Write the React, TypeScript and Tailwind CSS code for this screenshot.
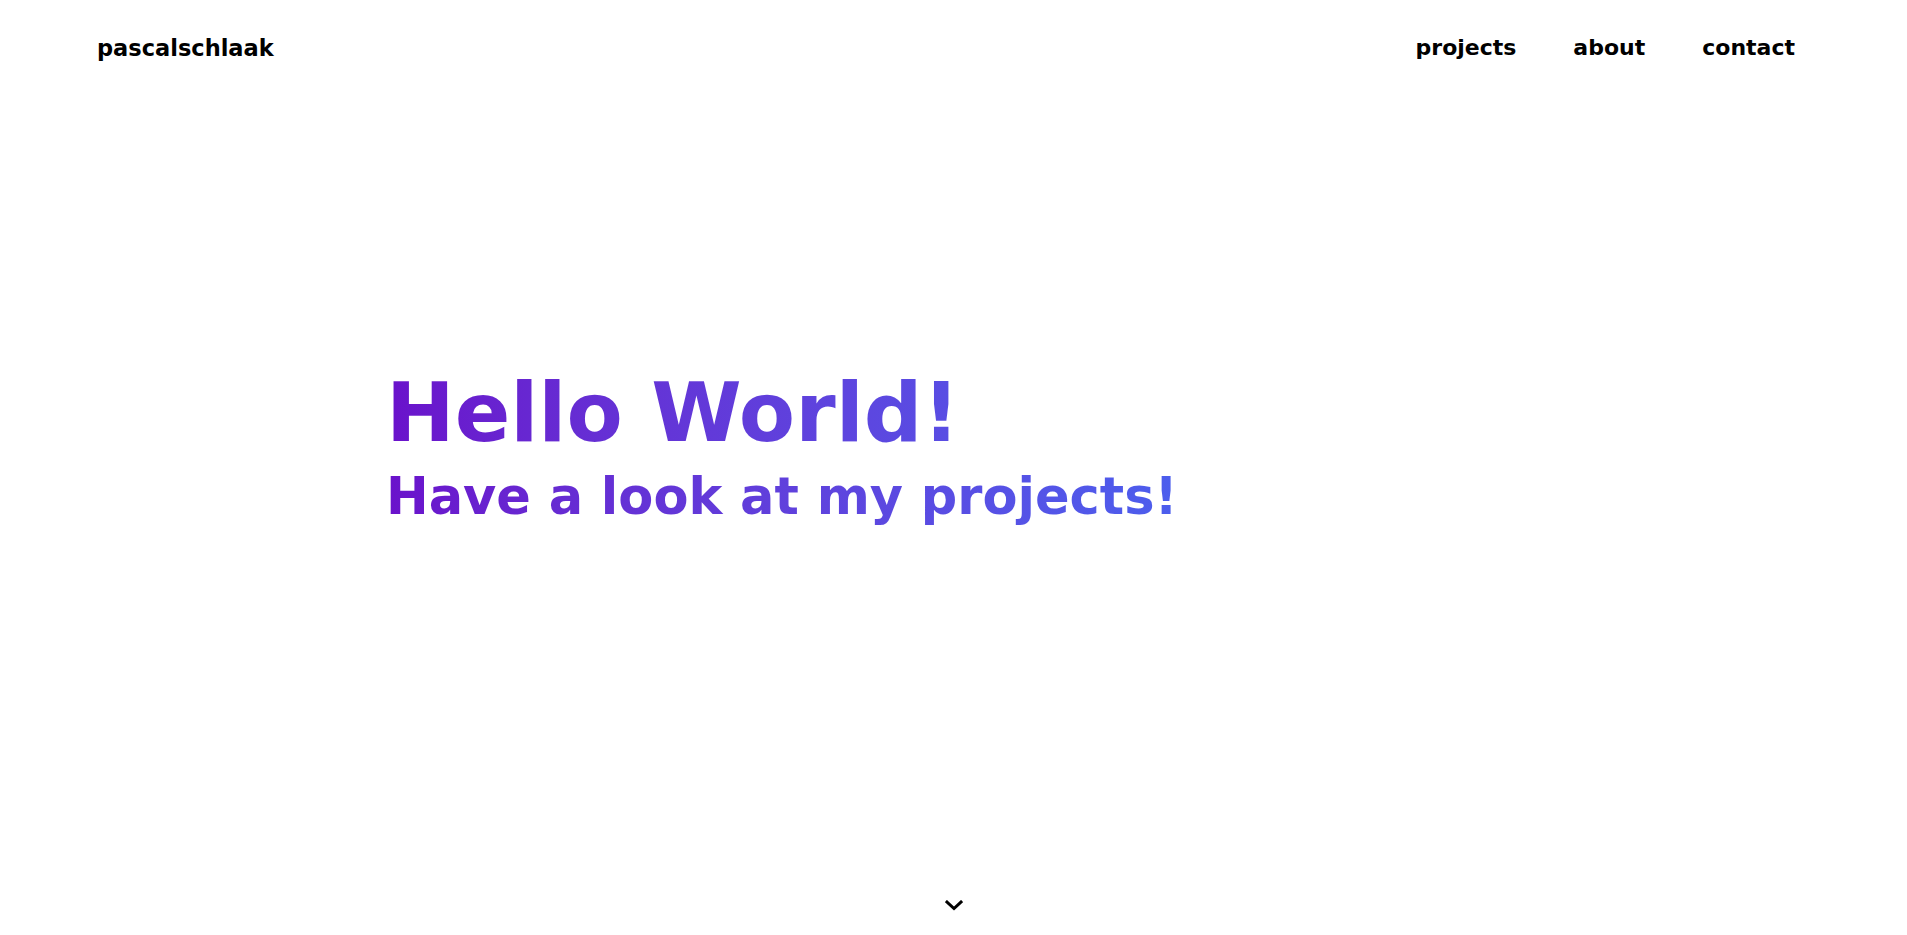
export default function App() {
  const links = ['projects', 'about', 'contact'];

  return (
    <div className="min-h-screen h-[935px] flex flex-col bg-white text-black font-['DejaVu_Sans',sans-serif]">
      <header className="flex items-center justify-between h-[96px] pl-[97px] pr-[112px]">
        <a href="#" className="text-[22.5px] font-bold leading-none">
          pascalschlaak
        </a>
        <nav className="flex items-center gap-[57px]">
          {links.map((link) => (
            <a key={link} href="#" className="text-[22px] font-bold leading-none">
              {link}
            </a>
          ))}
        </nav>
      </header>

      <main className="flex-1 flex flex-col">
        <div className="mx-auto w-[1135px] mt-[268px] bg-gradient-to-r from-[#6a11cb] to-[#2575fc] bg-clip-text text-transparent">
          <h1 className="text-[82px] font-bold leading-[1.2]">Hello World!</h1>
          <h2 className="mt-[4px] text-[51px] font-bold leading-[1.2]">Have a look at my projects!</h2>
        </div>

        <div className="mt-auto flex justify-center pb-[24px]">
          <svg width="18" height="11" viewBox="0 0 18 11" fill="none" stroke="#000" strokeWidth="3" strokeLinecap="square">
            <polyline points="2,2 9,8.5 16,2" />
          </svg>
        </div>
      </main>
    </div>
  );
}
